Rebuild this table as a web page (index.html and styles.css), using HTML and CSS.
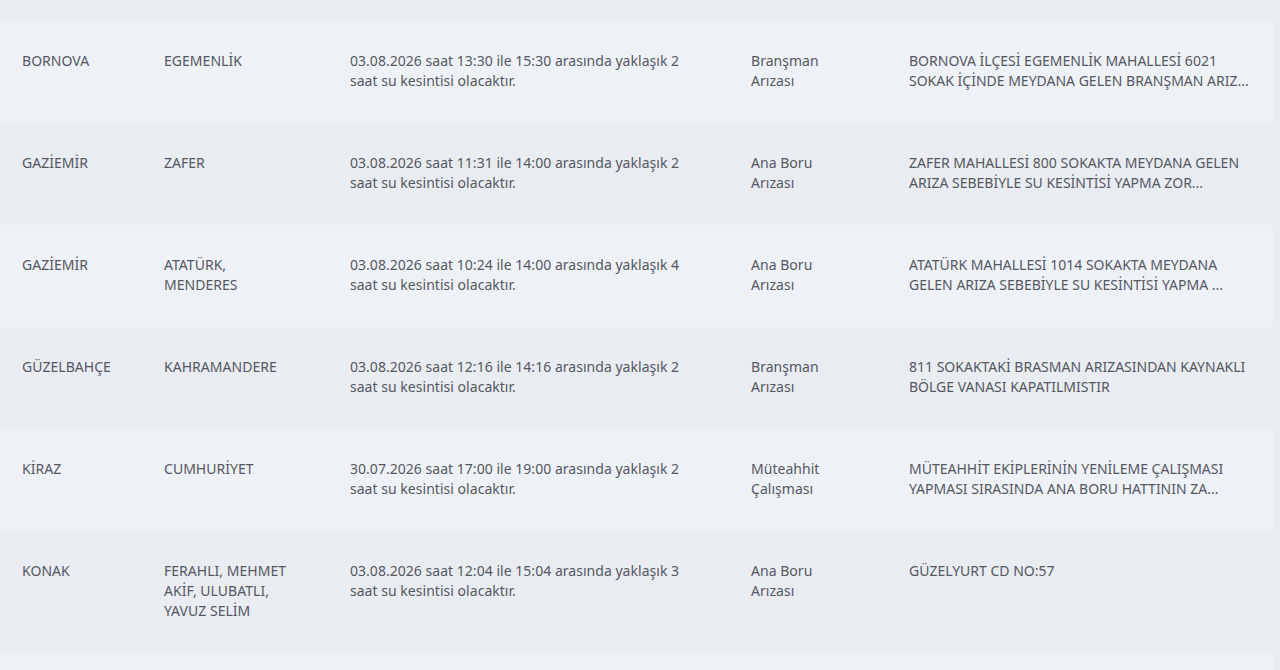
FILE: index.html
```html
<!DOCTYPE html>
<html lang="tr">
<head>
<meta charset="utf-8">
<title>Su Kesintileri</title>
<link rel="stylesheet" href="styles.css">
</head>
<body>
<div class="page">
  <table class="outages">
    <colgroup>
      <col class="c-ilce"><col class="c-mah"><col class="c-desc"><col class="c-type"><col class="c-note">
    </colgroup>
    <tbody>
      <tr class="odd">
        <td>BORNOVA</td>
        <td>EGEMENLİK</td>
        <td>03.08.2026 saat 13:30 ile 15:30 arasında yaklaşık 2 saat su kesintisi olacaktır.</td>
        <td class="type">Branşman Arızası</td>
        <td class="note">BORNOVA İLÇESİ EGEMENLİK MAHALLESİ 6021 SOKAK İÇİNDE MEYDANA GELEN BRANŞMAN ARIZ...</td>
      </tr>
      <tr class="even">
        <td>GAZİEMİR</td>
        <td>ZAFER</td>
        <td>03.08.2026 saat 11:31 ile 14:00 arasında yaklaşık 2 saat su kesintisi olacaktır.</td>
        <td class="type">Ana Boru Arızası</td>
        <td class="note">ZAFER MAHALLESİ 800 SOKAKTA MEYDANA GELEN ARIZA SEBEBİYLE SU KESİNTİSİ YAPMA ZOR...</td>
      </tr>
      <tr class="odd">
        <td>GAZİEMİR</td>
        <td>ATATÜRK, MENDERES</td>
        <td>03.08.2026 saat 10:24 ile 14:00 arasında yaklaşık 4 saat su kesintisi olacaktır.</td>
        <td class="type">Ana Boru Arızası</td>
        <td class="note">ATATÜRK MAHALLESİ 1014 SOKAKTA MEYDANA GELEN ARIZA SEBEBİYLE SU KESİNTİSİ YAPMA ...</td>
      </tr>
      <tr class="even">
        <td>GÜZELBAHÇE</td>
        <td>KAHRAMANDERE</td>
        <td>03.08.2026 saat 12:16 ile 14:16 arasında yaklaşık 2 saat su kesintisi olacaktır.</td>
        <td class="type">Branşman Arızası</td>
        <td class="note">811 SOKAKTAKİ BRASMAN ARIZASINDAN KAYNAKLI BÖLGE VANASI KAPATILMISTIR</td>
      </tr>
      <tr class="odd">
        <td>KİRAZ</td>
        <td>CUMHURİYET</td>
        <td>30.07.2026 saat 17:00 ile 19:00 arasında yaklaşık 2 saat su kesintisi olacaktır.</td>
        <td class="type">Müteahhit Çalışması</td>
        <td class="note">MÜTEAHHİT EKİPLERİNİN YENİLEME ÇALIŞMASI YAPMASI SIRASINDA ANA BORU HATTININ ZA...</td>
      </tr>
      <tr class="even">
        <td>KONAK</td>
        <td>FERAHLI, MEHMET AKİF, ULUBATLI, YAVUZ SELİM</td>
        <td>03.08.2026 saat 12:04 ile 15:04 arasında yaklaşık 3 saat su kesintisi olacaktır.</td>
        <td class="type">Ana Boru Arızası</td>
        <td class="note">GÜZELYURT CD NO:57</td>
      </tr>
      <tr class="odd">
        <td>KONAK</td>
        <td>KÜLTÜR</td>
        <td>03.08.2026 saat 12:00 ile 16:00 arasında yaklaşık 4 saat su kesintisi olacaktır.</td>
        <td class="type">Ana Boru Arızası</td>
        <td class="note">KÜLTÜR MAHALLESİ</td>
      </tr>
    </tbody>
  </table>
</div>
</body>
</html>
```
FILE: styles.css
```css
html, body {
  margin: 0;
  padding: 0;
  background: #e9ecf1;
}
body {
  font-family: "Noto Sans", "Open Sans", sans-serif;
  color: #555862;
  font-size: 14px;
  letter-spacing: 0.03px;
  overflow: hidden;
}
.page {
  padding-top: 21px;
  width: 1273px;
}
.outages {
  width: 1273px;
  border-collapse: collapse;
  table-layout: fixed;
}
.c-ilce { width: 142px; }
.c-mah { width: 186px; }
.c-desc { width: 401px; }
.c-type { width: 158px; }
.c-note { width: 386px; }
.outages td {
  vertical-align: top;
  padding: 30px 30px 32px 22px;
  line-height: 20px;
}
.outages td.type {
  padding-right: 46px;
}
.outages td.note {
  padding-right: 14px;
  letter-spacing: 0;
}
.outages tr.odd { background: #eef1f6; }
.outages tr.even { background: #e9ecf1; }
```
